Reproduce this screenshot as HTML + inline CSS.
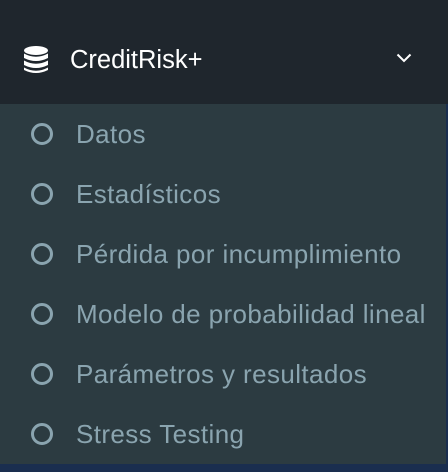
<!DOCTYPE html>
<html><head><meta charset="utf-8"><style>
body{margin:0;width:448px;height:472px;overflow:hidden;background:#2c3b41;font-family:"Liberation Sans",sans-serif;position:relative}
.hd{position:absolute;left:0;top:0;width:448px;height:104px;background:#1f262d}
.hd .t{position:absolute;left:70px;top:44px;font-size:25.5px;color:#fff;line-height:32px;letter-spacing:0px}
.it{position:absolute;left:0;height:60px;width:446px}
.it .c{position:absolute;left:31px;top:19px;width:16px;height:16px;border:3px solid #8aa4af;border-radius:50%;box-sizing:content-box}
.it span{position:absolute;left:76px;top:14px;font-size:26px;line-height:32px;color:#8aa4af;letter-spacing:0.4px;white-space:nowrap}
.bar{position:absolute;left:446px;top:104px;width:2px;height:368px;background:#1a2e4f}
.bot{position:absolute;left:0;top:464px;width:448px;height:8px;background:#1a2e4f}
</style></head><body>
<div class="hd">
<svg style="position:absolute;left:23px;top:46px" width="26" height="28" viewBox="0 0 26 28">
<ellipse cx="13" cy="4.5" rx="12" ry="4.5" fill="#fff"/>
<path d="M1 7.5 Q13 14 25 7.5 V12 Q13 18 1 12Z" fill="#fff"/>
<path d="M1 14.5 Q13 21 25 14.5 V19 Q13 25 1 19Z" fill="#fff"/>
<path d="M1 21.5 Q13 28 25 21.5 V24 Q13 30 1 24Z" fill="#fff"/>
</svg>
<div class="t">CreditRisk+</div>
<svg style="position:absolute;left:396px;top:53px" width="16" height="10" viewBox="0 0 16 10"><path d="M1.5 1.5 L8 8 L14.5 1.5" stroke="#fff" stroke-width="2" fill="none"/></svg>
</div>
<div class="it" style="top:104px"><div class="c"></div><span>Datos</span></div>
<div class="it" style="top:164px"><div class="c"></div><span>Estadísticos</span></div>
<div class="it" style="top:224px"><div class="c"></div><span>Pérdida por incumplimiento</span></div>
<div class="it" style="top:284px"><div class="c"></div><span>Modelo de probabilidad lineal</span></div>
<div class="it" style="top:344px"><div class="c"></div><span>Parámetros y resultados</span></div>
<div class="it" style="top:404px"><div class="c"></div><span>Stress Testing</span></div>
<div class="bar"></div>
<div class="bot"></div>
</body></html>
